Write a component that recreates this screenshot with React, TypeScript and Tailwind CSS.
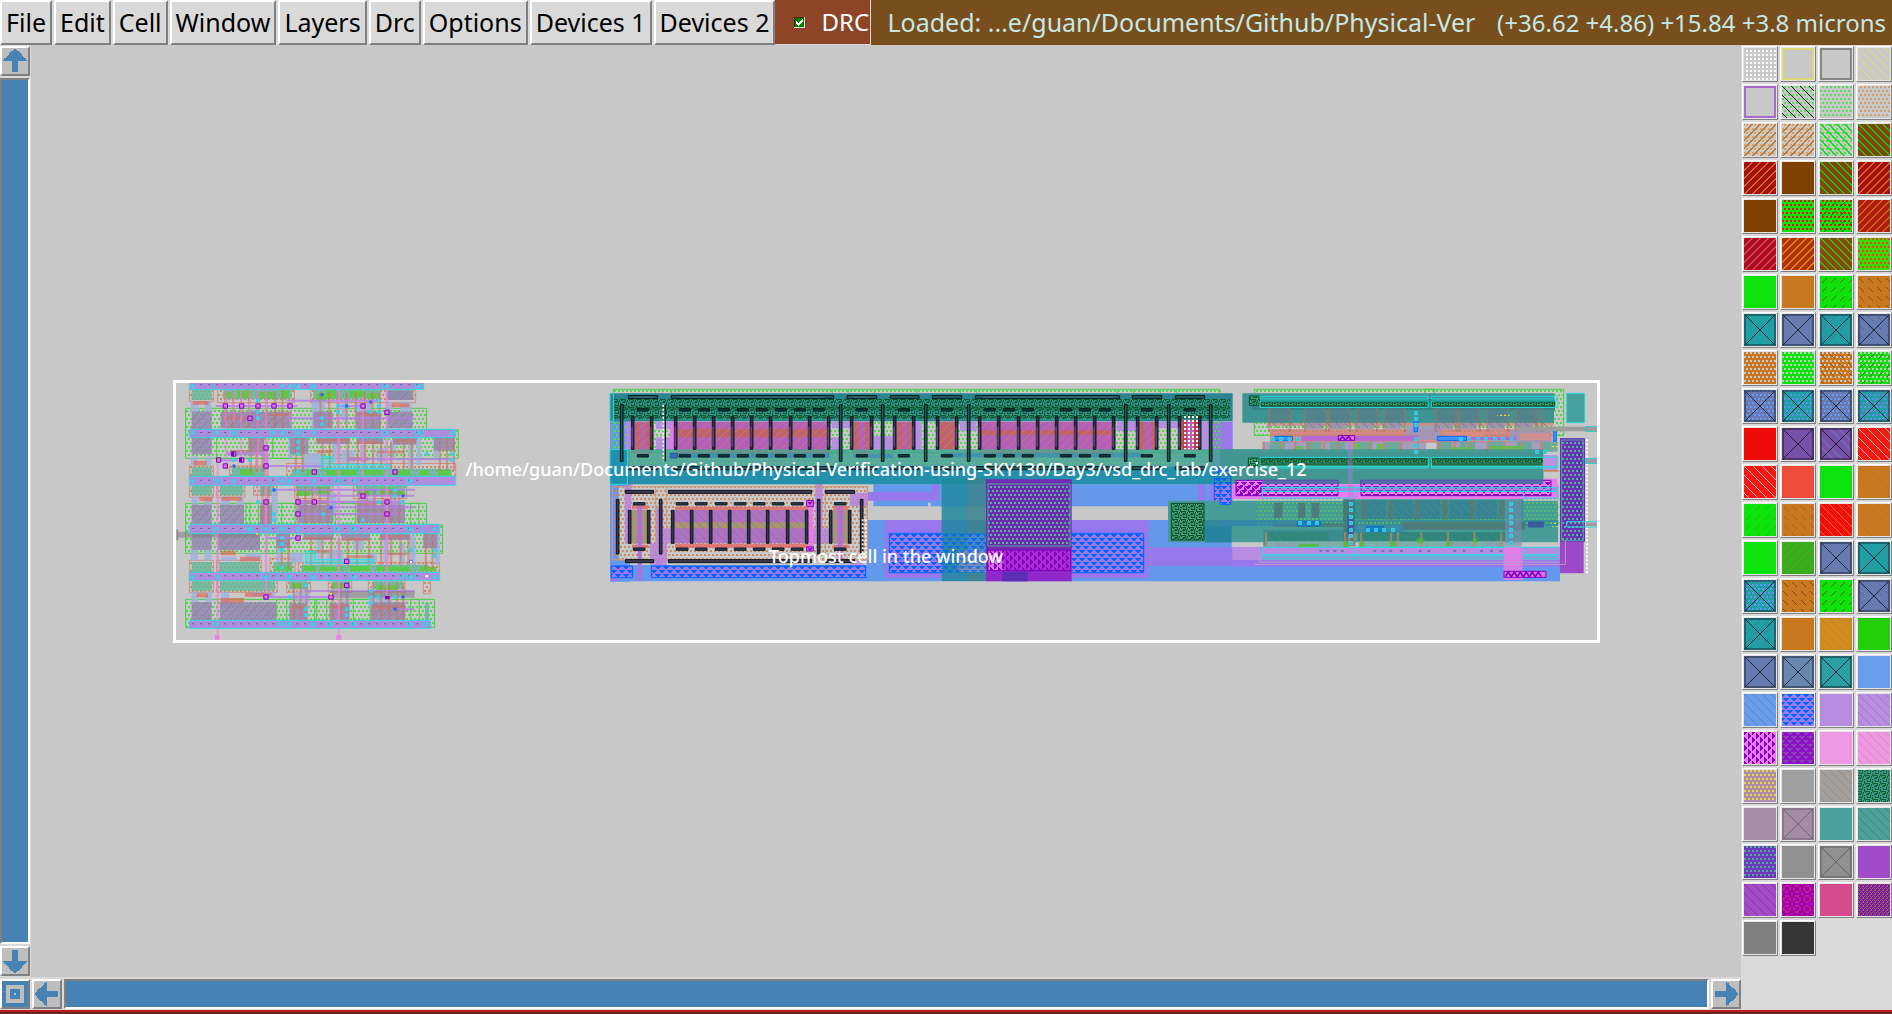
import React from "react";

type Layer = [kind: string, color: string];
type Swatch = { name: string; bg: string; layers?: Layer[] };

const px = (x: number, y: number, w: number, h: number) => `M${x} ${y}h${w}v${h}h${-w}z`;
const seq = (n: number, f: (i: number) => string) => Array.from({ length: n }, (_, i) => f(i)).join("");

/* Stipple tiles: size of the tile and the path that is painted in it. */
const TILES: Record<string, [number, string]> = {
  grid: [4, px(2, 2, 2, 2)],
  dots: [8, px(2, 0, 2, 2) + px(6, 0, 2, 2) + px(0, 4, 2, 2) + px(4, 4, 2, 2)],
  back: [9, seq(9, (i) => px(i, i, 1, 1))],
  back2: [8, seq(8, (i) => px(i, i, 1, 1) + px((i + 1) % 8, i, 1, 1))],
  fwd: [9, seq(9, (i) => px(8 - i, i, 1, 1))],
  fwd2: [8, seq(8, (i) => px(7 - i, i, 1, 1) + px((8 - i) % 8, i, 1, 1))],
  dashf: [9, seq(5, (i) => px(6 - i, i + 2, 1, 1))],
  dashb: [9, seq(5, (i) => px(i + 1, i + 2, 1, 1))],
  tri: [8, px(0, 0, 3, 1) + px(5, 0, 3, 1) + px(0, 1, 2, 1) + px(6, 1, 2, 1) + px(0, 2, 1, 1) + px(7, 2, 1, 1) + px(1, 4, 6, 1) + px(2, 5, 4, 1) + px(3, 6, 2, 1)],
  vtri: [8, px(0, 0, 1, 3) + px(0, 5, 1, 3) + px(1, 0, 1, 2) + px(1, 6, 1, 2) + px(2, 0, 1, 1) + px(2, 7, 1, 1) + px(4, 1, 1, 6) + px(5, 2, 1, 4) + px(6, 3, 1, 2)],
  weave: [8, px(0, 0, 3, 1) + px(4, 0, 1, 3) + px(6, 1, 2, 1) + px(1, 2, 1, 2) + px(2, 3, 3, 1) + px(6, 3, 1, 3) + px(0, 5, 3, 1) + px(3, 5, 1, 2) + px(5, 6, 1, 2) + px(1, 7, 3, 1) + px(7, 5, 1, 2)],
  rings: [10, px(3, 1, 4, 2) + px(3, 7, 4, 2) + px(1, 3, 2, 4) + px(7, 3, 2, 4) + px(0, 0, 1, 1) + px(9, 9, 1, 1) + px(0, 9, 1, 1) + px(9, 0, 1, 1)],
  check: [4, px(0, 0, 1, 1) + px(2, 0, 1, 1) + px(1, 1, 1, 1) + px(0, 2, 2, 1) + px(3, 3, 1, 1)],
};

function Stipple({ id, kind, color, scale = 1 }: { id: string; kind: string; color: string; scale?: number }) {
  const [size, d] = TILES[kind];
  return (
    <pattern id={id} width={size} height={size} patternUnits="userSpaceOnUse" patternTransform={`scale(${scale})`}>
      <path d={d} fill={color} shapeRendering="crispEdges" />
    </pattern>
  );
}

const G = "#0be30b", O = "#c87820", T = "#20a0a4", B = "#687bb0", Y = "#c8c8c8", K = "#1c2838";
const s = (name: string, bg: string, ...layers: Layer[]): Swatch => ({ name, bg, layers });

const SWATCHES: Swatch[] = [
  s("space", Y, ["grid", "#fff"]), s("outline yellow", Y, ["edge", "#dedc70"]), s("outline gray", Y, ["edge", "#808080"]), s("error", Y, ["back", "#e4e060"]),
  s("outline purple", Y, ["edge", "#a460c8"]), s("nwell", Y, ["dots", "#60d860"], ["back", "#102010"]), s("deep nwell", Y, ["dots", "#60d860"]), s("pwell", Y, ["dots", "#cf9f70"]),
  s("pdiff", Y, ["dots", "#cf9f70"], ["fwd2", O]), s("pdiff contact", Y, ["dots", "#cf9f70"], ["fwd2", O]), s("ndiff", Y, ["dots", "#60d860"], ["back2", G]), s("nfet", "#8b400c", ["back2", "#10d010"]),
  s("pfet", "#a60c10", ["fwd2", "#c87018"]), s("poly brown", "#804000"), s("nfet high", "#8b400c", ["back2", "#10d010"]), s("pfet high", "#a60c10", ["fwd2", "#c87018"]),
  s("varactor", "#804000"), s("nmos", G, ["dots", "#e81010"]), s("nmos low", G, ["dots", "#e81010"], ["dashf", "#206010"]), s("pmos", "#b01c10", ["fwd2", "#c86818"]),
  s("pfet low", "#b20828", ["fwd2", "#c45040"]), s("pfet mid", "#b43008", ["fwd2", "#d08c18"]), s("nfet mid", "#90440c", ["back2", "#20c810"]), s("nmos mid", "#34dc08", ["dots", "#e84810"]),
  s("ndiffusion", G), s("pdiffusion", O), s("ndiode", G, ["dashf", "#706010"]), s("pdiode", O, ["dashb", "#905010"]),
  s("ndc", T, ["cross", K]), s("pdc", B, ["cross", K]), s("ndic", T, ["dashf", "#5070a8"], ["cross", K]), s("pdic", B, ["dashb", "#4868a0"], ["cross", K]),
  s("nsd", O, ["dots", Y]), s("psd", G, ["dots", Y]), s("nsd high", O, ["dots", Y], ["dashb", "#905010"]), s("psd high", G, ["dots", Y], ["dashf", "#705030"]),
  s("nsc", B, ["dots", "#6898f0"], ["cross", K]), s("psc", T, ["dots", "#6090e8"], ["cross", K]), s("nsc high", B, ["dots", "#6898f0"], ["cross", K]), s("psc high", T, ["dots", "#6090e8"], ["dashf", "#706cb0"], ["cross", K]),
  s("poly", "#f00b0b"), s("poly contact", "#7852a8", ["cross", "#201830"]), s("xpoly contact", "#7852a8", ["back", "#6888b8"], ["cross", "#201830"]), s("poly resistor", "#fb160c", ["back", "#b8b0d8"], ["dashb", "#a04000"]),
  s("xres", "#fb160c", ["back", "#c8c0d8"]), s("high poly", "#f04c3c"), s("nres", G), s("pres", O, ["dashb", "#be7220"]),
  s("ndres", G, ["dashf", "#20bc10"]), s("pdres", O, ["dashb", "#a86420"]), s("mres", "#ee0e0c", ["back", "#e07020"]), s("rpdiff", O, ["back", "#c07220"]),
  s("nplus", G), s("nblock", "#40a820", ["fwd", "#18cc10"]), s("contact", B, ["cross", K]), s("licontact", T, ["cross", K]),
  s("mvnsc", T, ["dots", "#6098f0"], ["cross", K]), s("mvpdiode", O, ["dashb", "#904010"]), s("mvndiode", G, ["dashf", "#705010"]), s("mvpdc", B, ["dashb", "#5868b0"], ["cross", K]),
  s("mvndc", T, ["dashf", "#4078a0"], ["cross", K]), s("photo", "#c8781c"), s("photo high", "#d08c20", ["back", "#c88020"]), s("mvndiff", "#22d008", ["fwd", "#28c810"]),
  s("mvc", B, ["cross", K]), s("rc", "#6888b0", ["cross", K]), s("mvcc", "#2a9fa4", ["cross", K]), s("local interconnect", "#689cec"),
  s("local resistor", "#689cec", ["back", "#6088c0"]), s("viali", "#987cf0", ["tri", "#0064fc"]), s("metal1", "#b88ce0"), s("metal1 resistor", "#b88ce0", ["back", "#a878c4"]),
  s("via1", "#e87cec", ["vtri", "#8800c4"]), s("via1 mid", "#8c10c8", ["tri", "#8c40b4"]), s("metal2", "#ec98e4"), s("metal2 resistor", "#ec98e4", ["back", "#f080b0"]),
  s("via2", "#b08cb0", ["dots", "#e8e030"]), s("metal3", "#a0a0a0"), s("metal3 resistor", "#a0a0a0", ["back", "#b08868"]), s("via3", "#40948c", ["weave", "#0c6c30"]),
  s("mim capacitor", "#a48ca4"), s("mim contact", "#a48ca4", ["cross", "#706470"]), s("metal4", "#4aa09c"), s("metal4 resistor", "#4aa09c", ["back", "#508858"]),
  s("via4", "#7038b8", ["dots", "#48b0a0"]), s("mim2", "#909090"), s("mim2 contact", "#909090", ["cross", "#606060"]), s("metal5", "#a04cc8"),
  s("metal5 resistor", "#a04cc8", ["back", "#a02c98"]), s("glass", "#9800b8", ["rings", "#cc1c80"]), s("redistribution", "#d44c8c"), s("pad", "#8018a0", ["check", "#906070"]),
  s("filler gray", "#808080"), s("filler black", "#363636"),
];

function SwatchArt({ swatch, index }: { swatch: Swatch; index: number }) {
  return (
    <svg viewBox="0 0 32 32" className="block size-8" shapeRendering="crispEdges" aria-hidden="true">
      <rect width="32" height="32" fill={swatch.bg} />
      {swatch.layers?.map(([kind, color], j) => {
        if (kind === "edge") return <rect key={j} x="1" y="1" width="30" height="30" fill="none" stroke={color} strokeWidth="2" opacity=".9" />;
        if (kind === "cross")
          return (
            <g key={j} fill="none" stroke={color}>
              <rect x="1" y="1" width="30" height="30" strokeWidth="2" opacity=".5" />
              <path d="M1 1L31 31M31 1L1 31" />
            </g>
          );
        const id = `sw${index}-${j}`;
        return (
          <React.Fragment key={j}>
            <defs><Stipple id={id} kind={kind} color={color} /></defs>
            <rect width="32" height="32" fill={`url(#${id})`} />
          </React.Fragment>
        );
      })}
    </svg>
  );
}

/* Rectangles "x,y,w,h" separated by blanks, painted as one path. */
function R({ f = "none", o, l, r }: { f?: string; o?: number; l?: string; r: string }) {
  const d = r.trim().split(/\s+/).map((q) => { const [x, y, w, h] = q.split(",").map(Number); return px(x, y, w, h); }).join("");
  return <path d={d} fill={f} stroke={l} strokeWidth={l ? 3 : undefined} opacity={o} />;
}
/* Same-size rectangles at each x of a list. */
const cols = (xs: number[], y: number, w: number, h: number) => xs.map((x) => `${x},${y},${w},${h}`).join(" ");
const at = (pts: string, n: number) => pts.trim().split(/\s+/).map((p) => { const [x, y] = p.split(",").map(Number); return `${x - n / 2},${y - n / 2},${n},${n}`; }).join(" ");
const range = (a: number, b: number, step: number) => { const v: number[] = []; for (let x = a; x <= b; x += step) v.push(x); return v; };

const INKS: [string, string, string][] = [
  ["well", "dots", "#58d450"], ["tan", "dots", "#c88c68"], ["blueTri", "tri", "#0064fc"], ["violetTri", "vtri", "#8800c4"],
  ["violetRow", "tri", "#8800c4"], ["weave", "weave", "#0c5c2c"], ["capDots", "dots", "#58b0a0"], ["hatch", "fwd", "#90809c"], ["hatchB", "back", "#688070"],
  ["orangeHatch", "fwd", "#d08850"], ["greenHatch", "back", "#50c850"], ["whiteDots", "grid", "#ffffff"], ["yellowDots", "dots", "#e8e030"],
];

function StandardCells() {
  const rails = "88,37,703,21 88,178,799,24 88,319,799,27 88,463,751,27 88,607,751,24 88,751,724,24";
  return (
    <g transform="translate(160 370) scale(0.33333)">
      <path d="M77 115H800V180H895V265H77zM77 400H800V465H848V550H77zM77 688H824V772H77z" fill="url(#well)" stroke="#48d048" strokeWidth="3" />
      <R l="#48d048" r="170,202,168,63 338,202,52,63 258,400,12,63 295,400,40,63 365,400,40,63 526,400,60,63 752,400,24,63 320,490,30,60 350,688,30,63 404,688,60,63 470,688,30,63 580,688,50,63 752,688,26,63" />
      <R l="#cf917c" f="url(#tan)" r="88,58,72,36 173,58,230,40 452,58,315,40 88,288,72,31 209,288,115,31 380,280,507,40 88,346,72,36 170,346,85,36 281,346,70,30 404,346,115,40 580,346,160,40 88,571,72,36 170,571,134,36 330,565,75,42 415,577,423,30 88,631,72,36 170,631,182,36 380,631,72,36 505,631,70,36 625,631,110,36 790,631,22,40" />
      <R f="#a0b0e0" o={0.8} r="92,94,25,32 134,94,20,32 92,260,22,28 135,260,20,28 95,380,20,25 134,380,22,25 182,380,28,25 230,380,22,25 92,540,22,32 134,540,20,32 185,560,45,12 255,550,50,22 95,665,20,35 135,665,20,35 182,665,25,35 275,665,70,15 275,118,25,60 455,92,40,85 545,92,18,60 585,100,50,40 680,95,20,25 720,95,35,30 385,205,14,60 430,250,55,45 518,205,18,70 545,240,40,40 600,225,16,60 650,235,30,40 690,210,16,60 745,225,16,70 770,205,14,80 820,205,14,60 335,355,18,100 412,390,30,30 500,370,30,60 600,385,45,25 690,400,45,20 350,495,14,90 385,548,45,30 470,495,14,70 500,540,50,34 580,510,30,30 620,550,30,26 670,505,16,70 720,520,14,60 750,495,16,90 825,490,14,95 425,640,20,120 550,640,20,120 625,670,70,40 400,665,50,30" />
      <R f="#66b89c" o={0.85} r="95,60,60,30 190,60,205,28 460,60,200,28 682,60,78,28 95,292,60,26 216,292,100,26 395,296,480,22 95,348,60,28 180,348,70,28 300,348,35,28 412,348,100,28 590,348,145,28 95,576,60,30 178,576,120,30 340,576,58,28 425,584,380,20 95,634,60,28 180,634,165,28 388,634,55,24 515,634,55,24 640,634,90,24 795,700,12,50" />
      <R f="#58cc38" o={0.85} r="190,66,25,18 230,62,45,22 300,66,40,20 362,60,25,24 470,70,30,22 500,60,28,26 570,62,40,20 620,70,35,16 240,298,40,18 440,300,30,16 500,300,90,16 610,300,60,14 700,300,50,16 780,300,26,16 835,300,36,16 410,356,40,22 470,352,34,18 600,360,30,18 660,352,40,20 705,360,30,18 350,590,45,12 430,588,35,16 480,590,70,14 570,588,60,16 650,590,100,14 780,590,50,14 395,640,30,14 520,640,40,14 650,646,60,14" />
      <R f="#9486b0" o={0.85} r="95,125,60,128 182,125,213,50 460,125,58,50 590,125,72,52 680,62,78,28 680,125,78,50 95,404,60,60 180,404,72,58 300,404,35,58 410,404,110,55 590,404,145,55 95,490,60,50 172,490,128,50 95,697,60,54 180,697,168,54 388,700,50,50 508,700,60,50 632,697,104,54 265,202,48,45 390,202,55,50 470,202,100,20 590,202,80,20 700,202,70,22 822,202,62,40 350,490,40,45 430,490,90,20 545,490,85,20 660,490,90,20 790,490,42,45" />
      <R f="url(#hatch)" r="95,125,60,128 182,125,213,50 680,62,78,28 680,125,78,50 95,404,60,60 180,404,72,58 172,490,128,50 180,697,168,54 95,697,60,54 640,700,96,50" />
      <R f="#e06450" o={0.65} r="98,94,48,10 695,100,52,12 100,272,40,14 118,380,40,14 185,380,60,12 182,542,45,14 240,560,60,14 110,670,34,12 182,684,70,14 255,668,80,12" />
      <R f="#d0705c" o={0.55} r={[cols([193, 216, 240, 264, 290, 316, 342, 364], 62, 7, 112), cols([478, 504, 530, 556, 584, 610, 634, 656], 66, 7, 108), cols([268, 286, 304, 404, 424], 202, 8, 104), cols([484, 506, 534, 560, 590, 612, 636, 660, 690, 728, 752], 216, 7, 82), cols([836, 858, 878], 202, 7, 100), cols([304, 322, 410, 432, 454, 476, 500], 350, 7, 112), cols([594, 616, 640, 664, 690, 714], 360, 7, 100), cols([362, 382], 490, 7, 108), cols([450, 484, 510, 534, 560, 588, 624, 660, 690, 718, 742], 505, 7, 80), cols([794, 814], 490, 7, 108), cols([398, 418, 436, 514, 540, 558, 636, 660, 684, 708, 726], 640, 7, 110)].join(" ")} />
      <R f="#c47868" o={0.7} r="468,206,100,10 590,212,70,10 700,208,66,10 210,240,70,10 470,240,50,10 565,262,60,10 650,242,80,8 430,500,90,8 545,504,85,8 660,496,88,8 450,540,60,8 560,556,80,8 680,548,60,8 190,140,70,8 330,130,60,8 595,128,60,10 410,390,90,12 590,392,60,12 395,706,40,10 512,706,44,10 640,706,90,10" />
      <R f="#b080e4" o={0.8} r="380,89,280,6 167,105,245,6 530,105,80,6 390,142,373,6 200,246,124,10 175,268,60,6 318,285,170,6 560,265,325,6 340,356,424,6 480,374,284,6 414,392,320,8 500,409,264,6 414,429,300,6 318,501,96,6 440,660,324,6 318,678,200,6 705,715,58,6 311,230,14,70 700,360,8,75" />
      <R f="#807c84" o={0.55} r="50,485,245,18 510,663,254,20" />
      <path d="M52 479V510" stroke="#888" strokeWidth="5" />
      <R f="#ec80e0" o={0.6} r={[cols([193, 218, 240, 266], 37, 6, 120), "170,265,6,532 290,37,6,260 315,37,7,645 387,108,5,50 533,37,7,770 605,80,7,310 677,37,7,650 460,300,6,100 411,390,6,130 195,150,5,140 241,150,5,120 290,330,5,70"].join(" ")} />
      <R f="#ec80e8" r="165,795,14,14 529,795,15,14" />
      <R f="#b088e0" o={0.94} l="#28dce4" r={rails} />
      <R f="#ec80e0" o={0.25} r="169,319,8,430 290,37,8,22 314,178,8,460 532,37,9,730 676,37,9,600" />
      <g stroke="#28dce4" strokeWidth="3" fill="none">
        <path d="M160 37v21M403 37v21M452 37v21M667 37v21M767 37v21M160 178v24M209 178v24M233 178v24M330 178v24M380 178v24M404 178v24M430 178v24M667 178v24M767 178v24M790 178v24M160 319v27M184 319v27M330 319v27M352 319v27M380 319v27M524 319v27M548 319v27M740 319v27M160 463v27M258 463v27M280 463v27M305 463v27M330 463v27M355 463v27M380 463v27M524 463v27M572 463v27M740 463v27M788 463v27M305 607v24M330 607v24M355 607v24M380 607v24M452 607v24M500 607v24M572 607v24M740 607v24M764 607v24M160 751v24M355 751v24M380 751v24M452 751v24M500 751v24M572 751v24M620 751v24M740 751v24M788 751v24" />
        <path d="M485 260H517V283H690V296H500V296H485zM437 544H466V568H641V580H437z" fill="#28dce4" fillOpacity=".45" />
      </g>
      <R f="#386880" o={0.8} r={[37, 180, 323, 468, 610, 754].map((y) => cols(range(96, 780, 24), y + 6, 7, 3)).join(" ")} />
      <R f="#74b8e8" l="#24dce4" r={at("99,48 366,48 390,48 414,48 461,48 681,48 777,48 99,189 172,189 221,189 341,189 366,189 414,189 461,189 681,189 777,189 876,189 99,333 172,333 221,333 366,333 390,333 461,333 536,333 585,333 753,333 172,477 268,477 318,477 366,477 414,477 536,477 585,477 753,477 825,477 99,621 172,621 318,621 390,621 461,621 585,621 729,621 753,621 825,621 172,762 366,762 390,762 461,762 513,762 585,762 753,762 800,762", 8)} />
      <R f="#7eb0ea" l="#24dce4" r={at("294,92 294,126 294,144 486,144 486,162 534,108 534,126 558,108 656,92 656,108 656,126 632,126 414,216 414,234 414,252 414,304 221,270 270,270 800,252 876,252 876,270 342,432 342,450 342,360 489,432 609,450 705,360 705,378 656,396 729,396 294,396 366,504 366,522 366,540 366,594 753,540 825,540 825,558 438,646 560,646 390,681 438,717 438,735 560,717 560,735 633,663 633,681 633,699 656,681 705,681", 8)} />
      <R f="#e070e8" l="#8000c0" r={at("270,145 294,108 609,108 681,127 221,252 245,270 176,270 196,288 318,234 318,288 463,306 705,306 609,378 318,396 414,396 463,396 681,396 414,432 681,432 414,504 318,681 513,681 560,574 560,646 196,108 245,108 342,108 390,108", 13)} />
      <R f="#3060f0" r={at("486,74 222,288 342,360 513,413 729,378 753,574 729,681 705,717 632,96 560,108", 9)} />
      <R f="#8000c0" r="675,678,14,10 216,246,6,12 240,264,6,12" />
      <R f="#ffffff" r="796,616,9,6 750,572,6,6" /><R f="#e8e020" r="288,490,6,5 510,669,6,6" />
    </g>
  );
}

/* Dark bars with teal edges that mark the guard and contact columns. */
const shift = (v: number[]) => v.map((x) => x + 930);
const P_SHORT = [124, 181, 253, 310, 367, 424, 481, 538, 598, 655, 712, 781, 841, 910, ...shift([37, 109, 166, 235, 292, 352, 409, 466, 523, 580, 637, 709, 766, 835, 895])];
const P_TALL = [91, 748, 874, ...shift([73, 202, 673, 802, 928])];
const P_TAB = [142, 268, 325, 385, 442, 499, 556, 613, 670, 799, 925, ...shift([124, 253, 310, 367, 424, 481, 538, 598, 724, 853])].filter((x) => x !== 1354);
const P_LONG = (y: number) => `115,${y},88,9 244,${y},487,9 771,${y},89,9 901,${y},86,9 1027,${y},88,9 1156,${y},433,9 1627,${y},88,9 1756,${y},88,9`;
const N_LONG = (y: number) => `106,${y},85,9 235,${y},430,9 706,${y},88,9`;

const Y0 = "#c8c8c8";

function Drivers() {
  return (
    <g transform="translate(590 370) scale(0.33333)">
      <R f="#6498ec" r="60,150,60,485 60,585,2850,49 850,343,1010,66 830,450,1095,182" />
      <R f="#9878ec" r="885,450,790,174 60,624,26,10 1675,532,1235,56 1860,155,68,250 775,366,271,26 1025,343,22,48 1825,343,20,48" />
      <R f="#b880e0" o={0.8} r="104,335,24,185 676,325,22,60 198,400,20,190 780,370,40,220" />
      <R f="url(#well)" l="#48d048" r="70,58,1820,190" />
      <path d="M197 60v60M245 60v60M727 60v60M775 60v60M853 60v60M981 60v60M1111 60v60M1159 60v60M1582 60v60M1630 60v60M1711 60v60M1759 60v60" stroke="#48d048" strokeWidth="3" />
      <R f="#b888e4" o={0.9} r="106,155,30,85 198,155,60,22 198,202,60,38 725,155,60,20 725,202,28,38 850,198,60,40 965,155,30,85 1165,198,75,42 1110,155,50,28 1580,155,70,28 1700,155,75,20 1820,155,40,85" />
      <R f="#b460b8" r="133,155,54,85 258,155,460,85 790,155,51,85 918,155,47,85 1048,155,50,85 1170,155,400,85 1648,155,50,85 1777,155,48,85" />
      <R f="#c06468" o={0.95} r="138,155,15,85 167,155,14,85 258,177,460,25 792,155,15,85 826,155,12,85 922,155,15,85 952,155,12,85 1050,155,48,85 1170,181,400,14 1650,155,14,85 1684,155,12,85 1778,155,12,85 1812,155,10,85" />
      <R f="url(#orangeHatch)" o={0.6} r="138,155,45,85 258,155,460,85 792,155,46,85 922,155,42,85 1050,155,48,85 1170,155,400,85 1650,155,48,85" />
      <R f="#e878ec" r="240,155,12,85" />
      <R f="#2c8490" r="60,70,1868,84" />
      <R f="#389890" o={0.6} r="70,86,1850,64" />
      <R f="url(#weave)" r="70,86,1850,60" />
      <R f="#106030" o={0.4} r="70,108,1850,12 70,138,1850,6" />
      <R f="#44a09a" o={0.85} r="60,238,2800,104" />
      <R f="#2490ac" r="60,290,1868,53" /><R f="#2090ae" r="60,240,52,103" />
      <R f="url(#well)" o={0.35} r="112,243,1750,45" />
      <R f="#708c88" o={0.6} r="126,240,60,12 258,240,460,12 790,240,50,12 1170,240,400,12" />
      <R f="#3484b8" o={0.6} r="250,250,470,14 790,252,120,12 1060,250,600,12" />
      <R l="#30d8e0" r="60,70,10,84 60,238,52,105" />
      <R f="#3470b0" l="#2858a8" r="241,250,21,14" />
      <R f="#3c2850" l="#06201e" r={cols(P_SHORT, 140, 8, 98)} />
      <R f="#2c5450" l="#04181a" r={cols(P_TALL, 104, 8, 170)} />
      <R f="#143c3c" l="#04181a" r={cols(P_TAB, 116, 33, 7) + " " + cols(P_TAB, 254, 33, 7)} />
      <R f="#285c60" l="#04181a" r={P_LONG(77) + " " + P_LONG(290)} />
      <R f="#8c5498" o={0.7} r={cols(P_SHORT, 170, 4, 60)} />
      <R f="#508080" o={0.7} r="130,80,60,3 270,80,430,3 790,80,50,3 1180,80,390,3" />
      <path d="M220 104V274" stroke="#fff" strokeWidth="5" strokeDasharray="6 6" />
      <path d="M226 104V274" stroke="#102020" strokeWidth="4" />
      <R f="#cc3838" r="1777,150,46,88" /><R f="#b860c0" r="1790,150,22,88" /><R f="url(#whiteDots)" r="1777,136,48,102" />

      <R f={Y0} r="86,352,746,218" />
      <R f="url(#tan)" l="#d0987c" r="67,350,765,220 197,350,32,220 706,350,126,220" />
      <R f="#b880e0" o={0.8} r="104,352,20,168 676,352,22,170 198,415,22,170 780,368,52,40 218,475,30,45 655,475,65,45 180,520,50,65" />
      <R f="#e0706c" o={0.9} r="126,406,48,12 255,410,400,10 730,408,46,12 126,524,48,10 255,522,400,12 730,524,46,10" />
      <R f="#b070c4" r="124,420,50,100 252,420,400,100 728,420,50,100" />
      <R f="#b09078" r="126,420,16,100 156,420,16,100 252,457,400,18 730,420,14,100 760,420,14,100" />
      <R f="url(#greenHatch)" o={0.75} r="126,420,46,100 252,457,400,18 730,420,46,100" />
      <R f="url(#hatchB)" o={0.5} r="252,420,400,100" />
      <R f="#b070dc" r="143,408,12,225 743,408,14,165" /><R f="#ec78ec" r="656,405,14,135" />
      <R f="#38304c" l="#08201e" r={cols([115, 172, 244, 301, 358, 415, 472, 529, 589, 646, 718, 775], 421, 8, 99)} />
      <R f="#403850" l="#08141c" r={cols([79, 208, 682, 811], 388, 8, 164) + " " + N_LONG(361) + " " + N_LONG(569)} />
      <R f="#383454" l="#08201e" r={cols([130, 259, 316, 376, 433, 490, 547, 604, 733], 398, 35, 7) + " " + cols([130, 259, 316, 376, 433, 490, 547, 604, 733], 534, 35, 7)} />
      <R f="#e070e8" l="#8000c0" r="650,391,20,18 650,531,20,12" />
      <path d="M655 396l5 6 6-8M655 535l5 5 6-7" stroke="#8000c0" strokeWidth="4" fill="none" />
      <path d="M818 448V560M828 448V560" stroke="#fff" strokeWidth="5" strokeDasharray="6 6" />

      <R f="#9878ec" r="64,588,64,35 184,588,643,35 898,490,763,118" />
      <R f="url(#blueTri)" l="#0064fc" r="64,588,64,35 184,588,643,35 898,490,763,118 1873,300,50,103" />
      <R f="#2088a0" o={0.85} r="1055,325,76,308" /><R f="#3c8490" o={0.88} r="1131,325,58,165" /><R f="#248cb0" o={0.7} r="1131,490,58,143" />
      <R f="#3c8494" o={0.9} r="1131,608,106,25 1131,450,58,40" /><R f="#9890b0" o={0.6} r="1106,540,84,66" />
      <R f="url(#blueTri)" o={0.6} r="1055,490,135,118" />
      <R f="#702cb0" r="1188,328,257,213" /><R f="#9028cc" r="1188,540,257,94" /><R f="#5c30b4" r="1237,605,76,29" />
      <R f="#6c2cac" r="1194,342,246,186" /><R f="url(#capDots)" l="#50a8a0" r="1194,342,246,186" />
      <R f="#a830d4" r="1192,540,250,62" /><R f="#e080ec" o={0.8} r="1196,544,42,56" /><R f="url(#violetTri)" l="#8400b8" r="1192,540,250,62" />
      <R f={Y0} r="1014,398,8,12" />
      <R f="#489c98" r="1734,392,1170,125" /><R f="#2080a0" o={0.85} r="1845,450,80,67" /><R f="#348c98" o={0.7} r="1845,450,1060,18" />
      <R f="#48908c" r="1742,398,102,114" /><R f="#48a058" o={0.4} r="1744,400,98,110" /><R f="url(#weave)" l="#0c5030" r="1744,400,98,110" />
      <R f="#b88ce4" r="1927,532,983,38" /><R f="#9878ec" r="1927,570,983,20" />
    </g>
  );
}

function AnalogBlock() {
  const xs = [150, 258, 330, 412, 495];
  const xs2 = [650, 720, 805, 890, 968];
  return (
    <g transform="translate(1220 370) scale(0.33333)">
      <R f="url(#well)" l="#48d048" r="103,58,928,138 615,58,28,138" />
      <R f={Y0} o={0.8} r="127,213,495,30 650,213,350,30" />
      <R f="#d87874" o={0.8} r="150,178,845,40" />
      <R f="#9c98bc" o={0.85} r="560,150,100,60 870,180,120,35 128,215,490,28 650,215,340,28" />
      <R f="#e09080" o={0.7} r="900,190,90,20 670,186,120,14" />
      <R f="#c89088" o={0.8} r="140,158,860,10" />
      <R f="#b868d0" r="245,197,350,15 720,200,170,10" />
      <R f="#4894b0" o={0.5} r="600,134,400,10" />
      <R f="#68a898" o={0.9} r={cols([...xs, ...xs2], 215, 45, 30)} />
      <R f="#c88060" o={0.7} r={cols([128, 180, 222, 262, 308, 350, 400, 446, 490, 540, 590, 654, 700, 744, 800, 850, 900, 960], 215, 7, 34)} />
      <R f="#60c040" o={0.8} r="228,228,22,14 405,220,16,20 470,222,20,18 690,232,70,12 810,228,100,14" />
      <R f="#3c9494" r="67,70,935,88" /><R f="#44a09c" r="1040,70,54,88" l="#28d8e0" />
      <R f="#348484" r="95,86,910,34" />
      <R f="#54808c" o={0.8} r={cols([...xs, ...xs2.slice(0, 4)], 112, 60, 46)} />
      <R f="#a86c60" o={0.5} r={cols([...xs, ...xs2].flatMap((x) => [x - 6, x + 56]).filter((x) => x < 1000), 115, 7, 70)} />
      <R f="#9c8cb0" o={0.8} r={cols([...xs.slice(1), ...xs2.slice(0, 4)], 158, 50, 20)} />
      <R f="url(#hatchB)" o={0.8} r="150,115,405,60 650,115,345,60" />
      <R f="#40a060" o={0.5} r="88,78,32,28 120,95,505,14 634,95,370,14" />
      <R f="url(#weave)" l="#0c5030" r="88,78,32,28 120,93,505,16 634,93,370,16" />
      <R f="#0c6440" o={0.6} r="120,95,505,5 634,95,370,5" />
      <R l="#28dce4" r="120,79,505,8 634,79,379,8 120,93,505,19 634,93,379,19" />

      <R f="#409490" o={0.85} r="0,238,970,104" />
      <R f="#b88ce4" o={0.9} r="972,255,40,45" />
      <R f="#48a058" o={0.55} r="85,264,880,26" />
      <R f="url(#weave)" l="#0c5030" r="85,264,34,26 120,264,505,15 634,264,332,15" />
      <R f="#0c5c40" o={0.7} r="120,266,505,6 634,266,332,6 120,282,505,4 634,282,332,4" />
      <R l="#28dce4" r="120,262,505,32 634,262,379,32" />
      <path d="M120 290H625M634 290H1013" stroke="#28dce4" strokeWidth="3" />
      <R f="#c88858" r="972,300,44,5" /><R f={Y0} r="972,308,44,18" />

      <R f="#e87cec" r="0,343,1016,44" /><R f="#e87cec" r="48,331,306,46 423,331,570,46 972,326,40,20" />
      <R f="url(#violetTri)" r="48,345,80,32" />
      <R f="url(#violetRow)" l="#8000bc" r="48,331,306,46 423,331,570,46" />
      <R f="#4474a4" o={0.9} r="128,331,226,11 423,331,547,11" />
      <R f="#28a8c8" o={0.35} r="128,350,885,14" />
      <R l="#28dce4" r="127,352,886,12 127,352,276,32 910,364,103,20" />
      <R f="#9878ec" r="0,343,36,60" /><R f="url(#blueTri)" l="#0064fc" r="0,300,33,103" />

      <R f="url(#well)" o={0.6} r="110,387,908,75" />
      <R f="#348c90" o={0.85} r="370,388,540,60 130,480,260,50" />
      <R f="#4c7474" o={0.8} r="162,398,26,46 234,398,22,46 274,398,24,46 370,388,36,140 160,460,250,10 545,455,370,24" />
      <R f="#5c7470" o={0.75} r={cols([424, 505, 585, 668, 750, 838], 390, 14, 58)} />
      <R f="#348494" o={0.9} r={cols([438, 520, 600, 690, 770], 390, 60, 56)} />
      <R f="#2c887c" r="140,486,185,28 415,486,440,28" />
      <R f="#7cb0a8" r="140,514,250,17 415,514,440,17" />
      <R f="#c08868" o={0.7} r={cols([135, 372, 384, 400, 420, 510, 530, 600, 680, 760, 840], 487, 7, 44)} />
      <R f="#48c020" o={0.7} r="235,522,60,9 370,515,15,16 420,515,14,16 510,515,18,16 590,505,20,14 680,515,18,14 760,505,12,14" />
      <R f="#788cb0" o={0.6} r="855,390,50,140" />
      <R f="url(#hatchB)" o={0.7} r="438,390,420,58 140,486,715,28" />
      <R f="#9c90b8" o={0.6} r="165,520,60,10 690,518,60,10 800,518,40,10" />
      <R f="#3484b0" o={0.6} r="0,450,230,18 400,466,150,22" />
      <R f="#b88ce0" r="38,532,978,38" /><R l="#28dce4" r="127,532,886,22 127,558,886,9 403,532,507,22" />
      <R f="#5878a8" r={cols([298, 318, 340, 362, 460, 484, 508, 540, 596, 622, 700, 728, 780, 810, 838], 540, 9, 5)} />
      <R f="#44b4c8" o={0.4} r="127,558,886,9" />
      <R f="#ec78e8" o={0.85} r="851,532,57,98" /><R f="#b878d8" o={0.4} r="384,215,14,175" />
      <R f="#e070ec" l="#8000c0" r="355,197,49,14 852,604,126,18" />
      <path d="M358 210l10-10 8 10 10-10 8 10M856 620l9-14 9 14 9-14 9 14 9-14 9 14 9-14 9 14 9-14 9 14 9-14 9 14" stroke="#8000c0" strokeWidth="5" fill="none" />
      <R f="#4090f8" l="#0868f8" r="164,199,53,13 652,199,88,13 582,155,11,30 1000,180,9,34" />
      <R f="#1880c8" l="#1070b8" r="232,454,69,14 439,470,52,14" /><R f="#3c5c9c" l="#3458a0" r="926,456,44,15 384,442,15,50" />
      <R f="#60a8d8" l="#24dce4" r={at("159,207 183,207 209,207 234,207 588,129 588,147 588,165 588,207 588,228 588,246 723,207 747,207 774,207 798,207 825,207 849,207 876,207 951,246 975,246 393,402 393,420 393,441 393,459 393,480 393,498 393,519 873,402 873,420 873,441 873,459 873,480 873,498 873,519 240,459 267,459 291,459 444,480 468,480 492,480 519,480", 9)} />

      <R f="#9c48c8" r="1020,205,71,405" /><R f="#6834b0" r="1020,205,75,310" />
      <R f="url(#capDots)" l="#50a0b0" r="1025,210,65,302" />
      <path d="M1101 208V610" stroke="#fff" strokeWidth="6" strokeDasharray="6 6" />
      <R f="#9c9c9c" r="890,170,205,14" /><R f="#a09c9c" l="#28c8cc" r="1096,170,36,14 1096,266,36,14" />
      <R l="#28d8e0" r="1040,455,92,16" /><R f="#a09c9c" r="1098,458,34,10" />
      <R f="url(#yellowDots)" r="832,134,36,10 994,222,20,10 994,458,20,12" />
      <path d="M118 556V576H1018M1036 512V583H103" stroke="#b8a0cc" strokeWidth="3" fill="none" />
    </g>
  );
}

function ChipView() {
  return (
    <svg viewBox="172 380 1428 262" className="block w-[1428px] shrink-0 overflow-visible" role="img" aria-label="Chip layout of exercise_12">
      <defs>{INKS.map(([id, kind, color]) => <Stipple key={id} id={id} kind={kind} color={color} scale={3} />)}</defs>
      <StandardCells />
      <Drivers />
      <AnalogBlock />
      <path d="M173 380H1600V643H173zM176 383V640H1597V383z" fill="#fff" fillRule="evenodd" />
      <g fill="#fff" fontFamily="'Noto Sans', 'Open Sans', sans-serif" fontSize="18" fontWeight="500" textAnchor="middle">
        <text x="886" y="476">/home/guan/Documents/Github/Physical-Verification-using-SKY130/Day3/vsd_drc_lab/exercise_12</text>
        <text x="886" y="563">Topmost cell in the window</text>
      </g>
    </svg>
  );
}

const ARROW = "M13 1h2v1h1v1h1v1h1v1h1v1h1v1h1v1h1v1h1v1h1v1h1v1h1v2h1v1h-10v13h-6v-13h-10v-1h1v-2h1v-1h1v-1h1v-1h1v-1h1v-1h1v-1h1v-1h1v-1h1v-1h1z";

function ScrollButton({ label, turn }: { label: string; turn: string }) {
  return (
    <button aria-label={label} className="size-[30px] shrink-0 border-2 border-t-white border-l-white border-r-[#808080] border-b-[#808080] bg-[#bebebe]">
      <svg viewBox="0 0 28 30" preserveAspectRatio="none" className={`block size-[26px] ${turn}`} shapeRendering="crispEdges" aria-hidden="true">
        <path d={ARROW} fill="#4682b4" />
      </svg>
    </button>
  );
}

const MENUS = ["File", "Edit", "Cell", "Window", "Layers", "Drc", "Options", "Devices 1", "Devices 2"];

export default function App() {
  const [drc, setDrc] = React.useState(true);
  return (
    <div className="flex h-screen flex-col overflow-hidden bg-[#d9d9d9] font-['Noto_Sans','Open_Sans',sans-serif] text-black">
      <header className="flex h-[45px] shrink-0 bg-[#d9d9d9] text-[25px] leading-none whitespace-nowrap">
        <nav className="flex shrink-0 gap-[2px]">
          {MENUS.map((m) => (
            <button key={m} className="border-2 border-t-white border-l-white border-r-[#808080] border-b-[#808080] px-1">{m}</button>
          ))}
        </nav>
        <label className="flex w-24 shrink-0 items-center gap-4 overflow-hidden border-r border-b border-[#d9d9d9] bg-[#8e4527] pl-[19px] text-[24px] text-white">
          <input type="checkbox" checked={drc} onChange={() => setDrc(!drc)} className="peer sr-only" />
          <svg viewBox="0 0 11 11" className="block size-[11px] shrink-0" shapeRendering="crispEdges" aria-hidden="true">
            <rect width="11" height="11" fill="#d9d9d9" />
            <path d="M0 0h10v1H1v9H0z" fill="#502010" />
            <rect x="1" y="1" width="9" height="9" fill="#008000" />
            {drc && <path d="M2 4h1v1h1v1h1V5h1V4h1V3h1V2h1v3h-1v1h-1v1h-1v1h-1v1h-1v-1h-1v-1h-1z" fill="#fff" />}
          </svg>
          DRC
        </label>
        <div className="flex min-w-0 flex-1 items-center justify-between bg-[#784e1d] pr-[6px] pl-4 text-[#c5e8e6]">
          <span>Loaded: ...e/guan/Documents/Github/Physical-Ver</span>
          <span className="text-[24px]">(+36.62 +4.86) +15.84 +3.8 microns</span>
        </div>
      </header>

      <main className="flex min-h-0 flex-1">
        <div className="flex min-w-0 flex-1 flex-col">
          <div className="flex min-h-0 flex-1">
            <div className="flex w-[31px] shrink-0 flex-col gap-[2px] pt-px pb-px">
              <ScrollButton label="Scroll up" turn="" />
              <div className="w-[30px] flex-1 border-2 border-t-[#808080] border-r-white border-b-white border-l-[#808080] bg-[#4682b4]" />
              <ScrollButton label="Scroll down" turn="rotate-180" />
            </div>
            <div className="flex min-w-0 flex-1 items-center justify-center overflow-hidden bg-[#c8c8c8]">
              <ChipView />
            </div>
          </div>
          <div className="flex h-[33px] shrink-0 gap-[2px] pt-[2px]">
            <button aria-label="Fit view" className="size-[30px] shrink-0 border-2 border-t-white border-l-white border-r-[#808080] border-b-[#808080] bg-[#bebebe]">
              <svg viewBox="0 0 26 26" className="block size-[26px]" shapeRendering="crispEdges" aria-hidden="true">
                <path d="M0 0h26v26H0zM4 4v18h18V4zM8 8h10v10H8zM12 12v2h2v-2z" fill="#4682b4" fillRule="evenodd" />
              </svg>
            </button>
            <ScrollButton label="Scroll left" turn="-rotate-90" />
            <div className="h-[30px] flex-1 border-2 border-t-[#808080] border-r-white border-b-white border-l-[#808080] bg-[#4682b4]" />
            <ScrollButton label="Scroll right" turn="rotate-90" />
          </div>
        </div>
        <aside className="grid shrink-0 grid-cols-[repeat(4,36px)] content-start gap-[2px] overflow-hidden bg-[#d9d9d9] pt-px pl-px">
          {SWATCHES.map((sw, i) => (
            <button key={i} aria-label={sw.name} className="size-9 border border-t-white border-l-white border-r-[#808080] border-b-[#808080] bg-[#e4e4e4] p-px">
              <SwatchArt swatch={sw} index={i} />
            </button>
          ))}
        </aside>
      </main>
      <footer className="h-1 shrink-0 border-t-2 border-[#c41818] bg-[#5c2c24]" />
    </div>
  );
}
